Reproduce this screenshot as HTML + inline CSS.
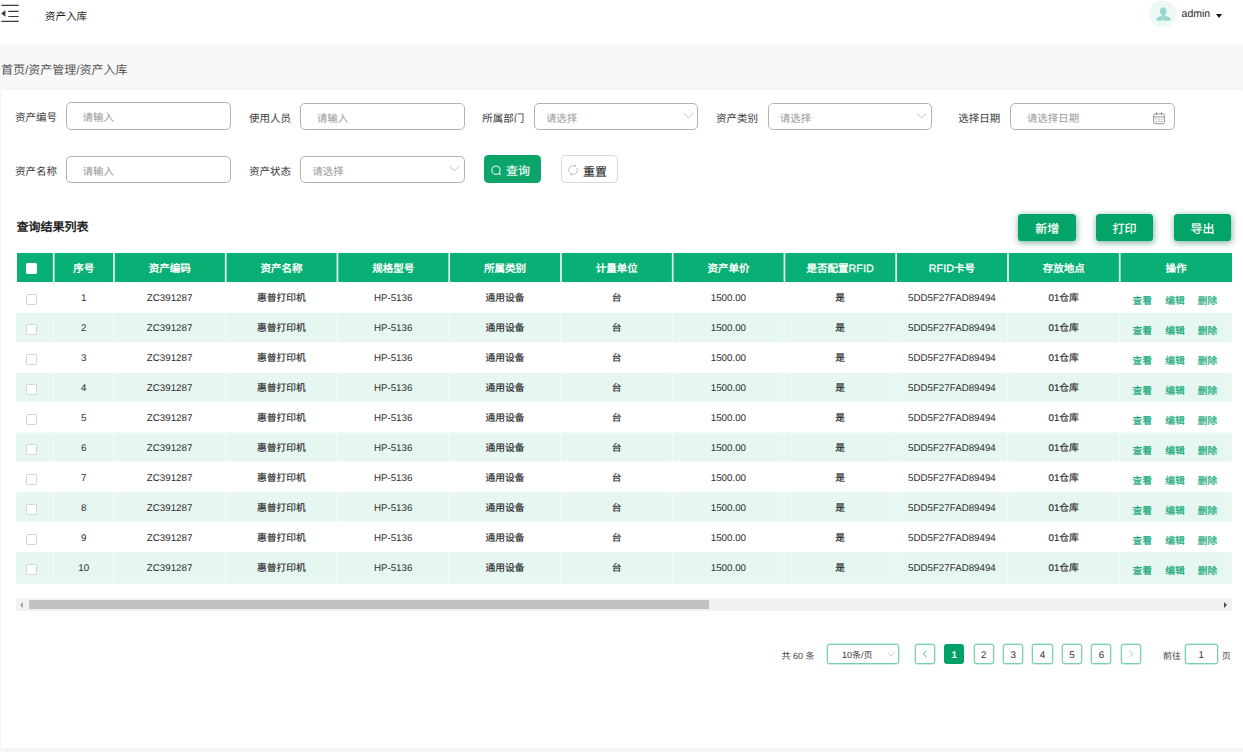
<!DOCTYPE html>
<html lang="zh-CN">
<head>
<meta charset="utf-8">
<title>资产入库</title>
<style>
*{box-sizing:border-box;margin:0;padding:0}
html,body{width:1243px;height:752px;overflow:hidden;background:#f8f8f8;text-rendering:geometricPrecision;font-family:"Liberation Sans",sans-serif;color:#333}
.abs{position:absolute}
#hdr{position:absolute;left:0;top:0;width:1243px;height:44px;background:#fff}
#menu{position:absolute;left:1px;top:4px}
#title{position:absolute;left:44.8px;top:9.6px;font-size:10.6px;line-height:14px;color:#1f1f1f}
#avatar{position:absolute;left:1149px;top:0px;transform:translate(0.1px,0.5px);width:27px;height:27px;border-radius:50%;background:#edf9f4}
#admin{position:absolute;left:1181.6px;top:7.1px;font-size:10.5px;line-height:14px;color:#222}
#caret{position:absolute;left:1215.7px;top:14px;width:0;height:0;border-left:3.9px solid transparent;border-right:3.9px solid transparent;border-top:4.1px solid #111}
#crumb{position:absolute;left:0.9px;top:62.3px;font-size:12px;line-height:16px;color:#555}
#card{position:absolute;left:1px;top:90.2px;width:1246px;height:658px;background:#fff;box-shadow:0 0 6px rgba(0,0,0,0.05)}
.lbl{position:absolute;font-size:10.5px;line-height:14px;color:#383838;font-weight:500;white-space:nowrap}
.inp{position:absolute;height:27px;width:164.8px;border:1px solid #b3b3b3;border-radius:5px;background:#fff;font-size:10.5px;color:#999;line-height:25px;white-space:nowrap}
.inp span{position:absolute;top:2px;line-height:25px}
input.txt{font-family:inherit;text-rendering:geometricPrecision;letter-spacing:normal;word-spacing:normal;outline:0;padding:3.4px 0 0 15.6px;line-height:normal;-webkit-appearance:none;appearance:none}
input.txt::placeholder{color:#999;opacity:1}
.chev{position:absolute;right:3.9px;top:8.3px}
button{font-family:inherit;text-rendering:geometricPrecision;letter-spacing:normal;word-spacing:normal;border:0;padding:0;margin:0;text-align:left;cursor:pointer}
.btn{position:absolute;height:27.4px;border-radius:4.5px;font-size:12px;font-weight:500;-webkit-text-stroke:0.12px currentColor;line-height:24px;white-space:nowrap}
#q{left:484.1px;top:155.3px;width:56.8px;background:#0ba56b;color:#fff}
#r{left:561.4px;top:155.3px;width:56.8px;background:#fff;border:1px solid #d8d8d8;color:#333}
.gbtn{position:absolute;top:214.1px;width:57.2px;height:27px;border-radius:3.6px;background:#02a468;color:#fff;font-size:12px;font-weight:500;-webkit-text-stroke:0.2px #fff;line-height:30.6px;text-align:center;box-shadow:0.5px 1.5px 6px rgba(20,105,90,0.5)}
#ttl{position:absolute;left:16.4px;top:218.5px;font-size:12px;font-weight:bold;line-height:16px;color:#1f1f1f}
table{position:absolute;left:15.95px;top:253.4px;border-collapse:separate;border-spacing:0;table-layout:fixed;width:1215.85px}
th{height:29.35px;background:#09b075;color:#fff;font-size:10.5px;border-bottom:1px solid #fff;font-weight:bold;text-align:center;vertical-align:middle;border-right:1px solid transparent;padding:1.5px 0 0 0;white-space:nowrap}
th:last-child,td:last-child{border-right:0}
th:first-child{border-left:1px solid #fff}
.lat{font-weight:normal;font-size:10.8px;-webkit-text-stroke:0.25px #fff}

td{height:30px;font-size:9.75px;font-weight:500;color:#2c2c2c;text-align:center;vertical-align:middle;padding:1.8px 0 0 0;white-space:nowrap;border-right:1px solid transparent}

.cb{display:inline-block;width:11px;height:11px;border:1px solid #d6d6d6;border-radius:1.2px;background:#fff;vertical-align:middle;position:relative;left:-3.5px;top:0.9px}
.hcb{border-color:#fff;top:-0.1px;left:-3.8px}
td.cj{padding:0.6px 0 1.2px 0;-webkit-text-stroke:0.18px #2c2c2c}
td.ops a{display:inline-block;color:#17a97a;font-weight:500;-webkit-text-stroke:0.22px #17a97a;margin:0 6.6px;position:relative;top:1.3px;left:-1px}
#sb{position:absolute;left:16px;top:598px;width:1216px;height:13px;background:#f1f1f1}
#thumb{position:absolute;left:13px;top:2px;width:680px;height:9px;background:#c1c1c1}
.pgtxt{position:absolute;font-size:9px;line-height:13px;color:#444;white-space:nowrap}
.pg{position:absolute;top:644.1px;width:20.2px;height:20.2px;border:1px solid #79d0ae;box-shadow:0 0 0 0.4px rgba(121,208,174,0.7);border-radius:2.5px;background:#fff;font-size:9.75px;line-height:21.2px;text-align:center;color:#303030}
.pg.act{background:#00a267;border-color:#00a267;box-shadow:none;color:#fff;font-weight:bold}
</style>
</head>
<body>
<div id="hdr">
  <svg id="menu" width="20" height="20" viewBox="0 0 20 20">
    <g stroke="#3a3a3a" stroke-width="1.15" fill="none">
      <path d="M0.3 1.4H17.7M7.3 7.3H17.7M7.3 12.5H17.7M0.3 17.4H17.7"/>
    </g>
    <path d="M0.2 9.4L4.4 6.1V12.7Z" fill="#3a3a3a"/>
  </svg>
  <div id="title">资产入库</div>
  <div id="avatar">
    <svg width="27" height="27" viewBox="0 0 27 27">
      <path d="M13.9 6.7c2.2 0 3.5 1.7 3.5 4 0 1.7-0.8 3.2-1.7 3.9v0.9c1.6 0.3 3.9 0.8 4.9 1.4 0.8 0.5 0.9 1.6 0.9 2.3 0 0.8-0.5 1.1-1.2 1.1H8.7c-0.8 0-1.2-0.4-1.2-1.1 0-0.7 0.1-1.8 0.9-2.3 1-0.6 2.6-1.1 4.2-1.4v-0.9c-0.9-0.7-1.7-2.2-1.7-3.9 0-2.3 0.8-4 3-4z" fill="#9ad6cf"/>
      <path d="M13.9 16.6l0.5 3.7h-1z" fill="#edf9f4"/>
    </svg>
  </div>
  <div id="admin">admin</div>
  <div id="caret"></div>
</div>
<div id="crumb">首页/资产管理/资产入库</div>
<div id="card"></div>

<div class="lbl" style="left:14.9px;top:111.3px">资产编号</div>
<input class="inp txt" type="text" placeholder="请输入" style="left:66px;top:102.4px;height:27.6px">
<div class="lbl" style="left:248.9px;top:112.3px">使用人员</div>
<input class="inp txt" type="text" placeholder="请输入" style="left:300.1px;top:103.1px;padding-top:5.2px">
<div class="lbl" style="left:482.3px;top:112.3px">所属部门</div>
<div class="inp" style="left:533.7px;top:103.1px"><span style="left:11.2px;top:2.7px">请选择</span>
  <svg class="chev" width="11" height="7" viewBox="0 0 11 7"><path d="M0.7 1.5L5.5 5.7L10.3 1.5" fill="none" stroke="#c4c4c6" stroke-width="1"/></svg></div>
<div class="lbl" style="left:716px;top:112.3px">资产类别</div>
<div class="inp" style="left:767.5px;top:103.1px"><span style="left:11.2px;top:2.7px">请选择</span>
  <svg class="chev" width="11" height="7" viewBox="0 0 11 7"><path d="M0.7 1.5L5.5 5.7L10.3 1.5" fill="none" stroke="#c4c4c6" stroke-width="1"/></svg></div>
<div class="lbl" style="left:958.3px;top:112.3px">选择日期</div>
<div class="inp" style="left:1010.1px;top:103.1px"><span style="left:15.6px;top:2.7px">请选择日期</span>
  <svg style="position:absolute;left:140.6px;top:7.1px" width="14" height="14" viewBox="0 0 14 14">
    <g fill="none" stroke="#8a8a8a" stroke-width="0.9">
      <rect x="1.6" y="2.9" width="10.8" height="9.8" rx="1.6"/>
      <path d="M1.6 5.9H12.4M4.4 1.2V4M9.6 1.2V4"/>
    </g>
    <g fill="#8a8a8a"><rect x="3.6" y="7.6" width="1.2" height="1"/><rect x="6.4" y="7.6" width="1.2" height="1"/><rect x="9.2" y="7.6" width="1.2" height="1"/><rect x="3.6" y="9.9" width="1.2" height="1"/><rect x="6.4" y="9.9" width="1.2" height="1"/><rect x="9.2" y="9.9" width="1.2" height="1"/></g>
  </svg></div>

<div class="lbl" style="left:14.9px;top:165.3px">资产名称</div>
<input class="inp txt" type="text" placeholder="请输入" style="left:66px;top:156px;padding-top:5.2px">
<div class="lbl" style="left:248.9px;top:165.3px">资产状态</div>
<div class="inp" style="left:300.1px;top:156px"><span style="left:11.2px;top:2.7px">请选择</span>
  <svg class="chev" width="11" height="7" viewBox="0 0 11 7"><path d="M0.7 1.5L5.5 5.7L10.3 1.5" fill="none" stroke="#c4c4c6" stroke-width="1"/></svg></div>
<button type="button" class="btn" id="q">
  <svg style="position:absolute;left:6.6px;top:9.6px" width="12" height="12" viewBox="0 0 12 12"><circle cx="5" cy="5.2" r="4.1" fill="none" stroke="#fff" stroke-width="1"/><path d="M7.9 8.2L9.6 9.9" stroke="#fff" stroke-width="1.1"/></svg>
  <span style="position:absolute;left:22px;top:4.2px">查询</span></button>
<button type="button" class="btn" id="r">
  <svg style="position:absolute;left:4.5px;top:7.6px" width="12" height="12" viewBox="0 0 12 12"><g fill="none" stroke="#b4b7bd" stroke-width="0.9"><path d="M2.3 8.2A4.3 4.3 0 0 1 8.2 2.2"/><path d="M9.7 3.8A4.3 4.3 0 0 1 3.8 9.8"/><path d="M8.4 0.6L8.3 2.4L6.6 2.3"/><path d="M3.6 11.4L3.7 9.6L5.4 9.7"/></g></svg>
  <span style="position:absolute;left:20.6px;top:3.7px">重置</span></button>

<div id="ttl">查询结果列表</div>
<button type="button" class="gbtn" style="left:1018.4px;width:57.6px">新增</button>
<button type="button" class="gbtn" style="left:1096px">打印</button>
<button type="button" class="gbtn" style="left:1174px">导出</button>


<svg class="abs" style="left:0;top:300px;pointer-events:none" width="1243" height="290" viewBox="0 0 1243 290">
<rect x="16" y="13.00" width="1215.8" height="29.05" fill="#e6f7f1"/><rect x="16" y="72.75" width="1215.8" height="29.05" fill="#e6f7f1"/><rect x="16" y="132.50" width="1215.8" height="29.05" fill="#e6f7f1"/><rect x="16" y="192.25" width="1215.8" height="29.05" fill="#e6f7f1"/><rect x="16" y="252.00" width="1215.8" height="31.7" fill="#e6f7f1"/>
</svg>
<table><colgroup><col style="width:38.15px"><col style="width:60.2px"><col style="width:111.75px"><col style="width:111.75px"><col style="width:111.75px"><col style="width:111.75px"><col style="width:111.75px"><col style="width:111.75px"><col style="width:111.75px"><col style="width:111.75px"><col style="width:111.75px"><col style="width:111.75px"></colgroup>
<thead><tr><th><span class="cb hcb"></span></th><th>序号</th><th>资产编码</th><th>资产名称</th><th>规格型号</th><th>所属类别</th><th>计量单位</th><th>资产单价</th><th>是否配置<span class="lat">RFID</span></th><th><span class="lat">RFID</span>卡号</th><th>存放地点</th><th>操作</th></tr></thead>
<tbody>
<tr><td><span class="cb"></span></td><td>1</td><td>ZC391287</td><td class="cj">惠普打印机</td><td>HP-5136</td><td class="cj">通用设备</td><td class="cj">台</td><td>1500.00</td><td class="cj">是</td><td>5DD5F27FAD89494</td><td class="cj">01仓库</td><td class="ops"><a>查看</a><a>编辑</a><a>删除</a></td></tr>
<tr><td><span class="cb"></span></td><td>2</td><td>ZC391287</td><td class="cj">惠普打印机</td><td>HP-5136</td><td class="cj">通用设备</td><td class="cj">台</td><td>1500.00</td><td class="cj">是</td><td>5DD5F27FAD89494</td><td class="cj">01仓库</td><td class="ops"><a>查看</a><a>编辑</a><a>删除</a></td></tr>
<tr><td><span class="cb"></span></td><td>3</td><td>ZC391287</td><td class="cj">惠普打印机</td><td>HP-5136</td><td class="cj">通用设备</td><td class="cj">台</td><td>1500.00</td><td class="cj">是</td><td>5DD5F27FAD89494</td><td class="cj">01仓库</td><td class="ops"><a>查看</a><a>编辑</a><a>删除</a></td></tr>
<tr><td><span class="cb"></span></td><td>4</td><td>ZC391287</td><td class="cj">惠普打印机</td><td>HP-5136</td><td class="cj">通用设备</td><td class="cj">台</td><td>1500.00</td><td class="cj">是</td><td>5DD5F27FAD89494</td><td class="cj">01仓库</td><td class="ops"><a>查看</a><a>编辑</a><a>删除</a></td></tr>
<tr><td><span class="cb"></span></td><td>5</td><td>ZC391287</td><td class="cj">惠普打印机</td><td>HP-5136</td><td class="cj">通用设备</td><td class="cj">台</td><td>1500.00</td><td class="cj">是</td><td>5DD5F27FAD89494</td><td class="cj">01仓库</td><td class="ops"><a>查看</a><a>编辑</a><a>删除</a></td></tr>
<tr><td><span class="cb"></span></td><td>6</td><td>ZC391287</td><td class="cj">惠普打印机</td><td>HP-5136</td><td class="cj">通用设备</td><td class="cj">台</td><td>1500.00</td><td class="cj">是</td><td>5DD5F27FAD89494</td><td class="cj">01仓库</td><td class="ops"><a>查看</a><a>编辑</a><a>删除</a></td></tr>
<tr><td><span class="cb"></span></td><td>7</td><td>ZC391287</td><td class="cj">惠普打印机</td><td>HP-5136</td><td class="cj">通用设备</td><td class="cj">台</td><td>1500.00</td><td class="cj">是</td><td>5DD5F27FAD89494</td><td class="cj">01仓库</td><td class="ops"><a>查看</a><a>编辑</a><a>删除</a></td></tr>
<tr><td><span class="cb"></span></td><td>8</td><td>ZC391287</td><td class="cj">惠普打印机</td><td>HP-5136</td><td class="cj">通用设备</td><td class="cj">台</td><td>1500.00</td><td class="cj">是</td><td>5DD5F27FAD89494</td><td class="cj">01仓库</td><td class="ops"><a>查看</a><a>编辑</a><a>删除</a></td></tr>
<tr><td><span class="cb"></span></td><td>9</td><td>ZC391287</td><td class="cj">惠普打印机</td><td>HP-5136</td><td class="cj">通用设备</td><td class="cj">台</td><td>1500.00</td><td class="cj">是</td><td>5DD5F27FAD89494</td><td class="cj">01仓库</td><td class="ops"><a>查看</a><a>编辑</a><a>删除</a></td></tr>
<tr><td><span class="cb"></span></td><td>10</td><td>ZC391287</td><td class="cj">惠普打印机</td><td>HP-5136</td><td class="cj">通用设备</td><td class="cj">台</td><td>1500.00</td><td class="cj">是</td><td>5DD5F27FAD89494</td><td class="cj">01仓库</td><td class="ops"><a>查看</a><a>编辑</a><a>删除</a></td></tr>
</tbody>
</table>

<svg class="abs" style="left:0;top:253px;pointer-events:none" width="1243" height="332" viewBox="0 0 1243 332">
<rect x="52.85" y="0" width="1.7" height="29.3" fill="#fff" opacity="0.92"/><rect x="52.85" y="29.3" width="1.1" height="301.4" fill="#fff" opacity="0.5"/><rect x="113.10" y="0" width="1.7" height="29.3" fill="#fff" opacity="0.92"/><rect x="113.10" y="29.3" width="1.1" height="301.4" fill="#fff" opacity="0.5"/><rect x="224.85" y="0" width="1.7" height="29.3" fill="#fff" opacity="0.92"/><rect x="224.85" y="29.3" width="1.1" height="301.4" fill="#fff" opacity="0.5"/><rect x="336.60" y="0" width="1.7" height="29.3" fill="#fff" opacity="0.92"/><rect x="336.60" y="29.3" width="1.1" height="301.4" fill="#fff" opacity="0.5"/><rect x="448.35" y="0" width="1.7" height="29.3" fill="#fff" opacity="0.92"/><rect x="448.35" y="29.3" width="1.1" height="301.4" fill="#fff" opacity="0.5"/><rect x="560.10" y="0" width="1.7" height="29.3" fill="#fff" opacity="0.92"/><rect x="560.10" y="29.3" width="1.1" height="301.4" fill="#fff" opacity="0.5"/><rect x="671.85" y="0" width="1.7" height="29.3" fill="#fff" opacity="0.92"/><rect x="671.85" y="29.3" width="1.1" height="301.4" fill="#fff" opacity="0.5"/><rect x="783.60" y="0" width="1.7" height="29.3" fill="#fff" opacity="0.92"/><rect x="783.60" y="29.3" width="1.1" height="301.4" fill="#fff" opacity="0.5"/><rect x="895.35" y="0" width="1.7" height="29.3" fill="#fff" opacity="0.92"/><rect x="895.35" y="29.3" width="1.1" height="301.4" fill="#fff" opacity="0.5"/><rect x="1007.10" y="0" width="1.7" height="29.3" fill="#fff" opacity="0.92"/><rect x="1007.10" y="29.3" width="1.1" height="301.4" fill="#fff" opacity="0.5"/><rect x="1118.85" y="0" width="1.7" height="29.3" fill="#fff" opacity="0.92"/><rect x="1118.85" y="29.3" width="1.1" height="301.4" fill="#fff" opacity="0.5"/>
</svg>

<div id="sb"><div id="thumb"></div>
  <div class="abs" style="left:3.8px;top:3.5px;width:0;height:0;border-top:3px solid transparent;border-bottom:3px solid transparent;border-right:3.6px solid #a3a3a3"></div>
  <div class="abs" style="right:4.6px;top:3.5px;width:0;height:0;border-top:3px solid transparent;border-bottom:3px solid transparent;border-left:3.6px solid #505050"></div>
</div>

<div class="pgtxt" style="left:781.4px;top:649.9px">共 60 条</div>
<div class="pg" style="left:826.6px;width:72.8px;text-align:left"><span style="position:absolute;left:14.4px;top:-0.3px;font-size:9px">10条/页</span>
  <svg style="position:absolute;left:59.5px;top:6.5px" width="8" height="6" viewBox="0 0 8 6"><path d="M0.8 0.8L4 4L7.2 0.8" fill="none" stroke="#c4c7ce" stroke-width="0.8"/></svg></div>
<div class="pg" style="left:914.5px"><svg style="position:absolute;left:5.2px;top:4.1px" width="8" height="10" viewBox="0 0 8 10"><path d="M5.6 1.9L2.3 5L5.6 8.1" fill="none" stroke="#3db58b" stroke-width="0.9"/></svg></div>
<div class="pg act" style="left:944.0px">1</div><div class="pg" style="left:973.5px">2</div><div class="pg" style="left:1003.0px">3</div><div class="pg" style="left:1032.4px">4</div><div class="pg" style="left:1061.9px">5</div><div class="pg" style="left:1091.3px">6</div>
<div class="pg" style="left:1120.8px"><svg style="position:absolute;left:5.6px;top:4.1px" width="8" height="10" viewBox="0 0 8 10"><path d="M2.4 1.9L5.7 5L2.4 8.1" fill="none" stroke="#7fd0b0" stroke-width="0.9"/></svg></div>
<div class="pgtxt" style="left:1163px;top:650.2px">前往</div>
<div class="pg" style="left:1184.5px;width:33.5px">1</div>
<div class="pgtxt" style="left:1221.8px;top:650.2px">页</div>
</body>
</html>
